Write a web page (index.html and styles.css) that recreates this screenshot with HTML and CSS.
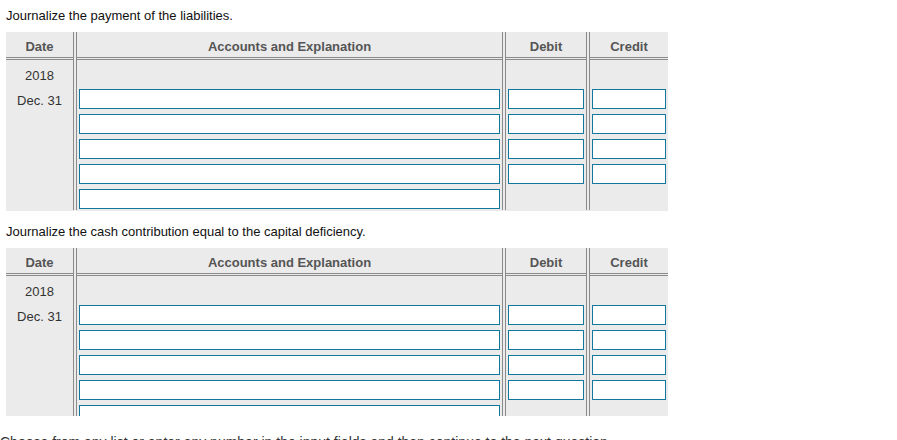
FILE: index.html
```html
<!DOCTYPE html>
<html>
<head>
<meta charset="utf-8">
<link rel="stylesheet" href="styles.css">
</head>
<body>
<div class="page">
  <p class="prompt">Journalize the payment of the liabilities.</p>
  <div class="journal">
    <div class="col col-date">
      <div class="head">Date</div>
      <div class="cell text">2018</div>
      <div class="cell text">Dec. 31</div>
    </div>
    <div class="col col-acct">
      <div class="head">Accounts and Explanation</div>
      <div class="cell"></div>
      <div class="cell"><input class="field"></div>
      <div class="cell"><input class="field"></div>
      <div class="cell"><input class="field"></div>
      <div class="cell"><input class="field"></div>
      <div class="cell"><input class="field"></div>
    </div>
    <div class="col col-debit">
      <div class="head">Debit</div>
      <div class="cell"></div>
      <div class="cell"><input class="field"></div>
      <div class="cell"><input class="field"></div>
      <div class="cell"><input class="field"></div>
      <div class="cell"><input class="field"></div>
    </div>
    <div class="col col-credit">
      <div class="head">Credit</div>
      <div class="cell"></div>
      <div class="cell"><input class="field"></div>
      <div class="cell"><input class="field"></div>
      <div class="cell"><input class="field"></div>
      <div class="cell"><input class="field"></div>
    </div>
  </div>

  <p class="prompt prompt-2">Journalize the cash contribution equal to the capital deficiency.</p>
  <div class="clip">
    <div class="journal">
      <div class="col col-date">
        <div class="head">Date</div>
        <div class="cell text">2018</div>
        <div class="cell text">Dec. 31</div>
      </div>
      <div class="col col-acct">
        <div class="head">Accounts and Explanation</div>
        <div class="cell"></div>
        <div class="cell"><input class="field"></div>
        <div class="cell"><input class="field"></div>
        <div class="cell"><input class="field"></div>
        <div class="cell"><input class="field"></div>
        <div class="cell"><input class="field"></div>
      </div>
      <div class="col col-debit">
        <div class="head">Debit</div>
        <div class="cell"></div>
        <div class="cell"><input class="field"></div>
        <div class="cell"><input class="field"></div>
        <div class="cell"><input class="field"></div>
        <div class="cell"><input class="field"></div>
      </div>
      <div class="col col-credit">
        <div class="head">Credit</div>
        <div class="cell"></div>
        <div class="cell"><input class="field"></div>
        <div class="cell"><input class="field"></div>
        <div class="cell"><input class="field"></div>
        <div class="cell"><input class="field"></div>
      </div>
    </div>
  </div>
</div>
<p class="footnote">Choose from any list or enter any number in the input fields and then continue to the next question.</p>
</body>
</html>
```

FILE: styles.css
```css
* { box-sizing: border-box; }

html, body {
  margin: 0;
  padding: 0;
  background: #ffffff;
}

body {
  font-family: "Liberation Sans", Arial, sans-serif;
  font-size: 13px;
  line-height: 15px;
  color: #111111;
  width: 897px;
  height: 440px;
  overflow: hidden;
}

.page {
  padding: 8px 0 0 6px;
}

.prompt {
  margin: 0 0 9px 0;
  height: 15px;
}

.prompt-2 {
  margin-top: 13px;
}

.journal {
  display: flex;
  width: 662px;
  background: #ebebeb;
  padding-bottom: 1px;
}

.clip {
  height: 168px;
  overflow: hidden;
}

.col {
  display: flex;
  flex-direction: column;
}

.col-date { width: 67px; }
.col-acct { width: 429px; }
.col-debit { width: 84px; }
.col-credit { width: 82px; }

.col-acct,
.col-debit,
.col-credit {
  border-left: 4px double #8a8a8a;
}

.head {
  height: 28px;
  padding-top: 7px;
  border-bottom: 3px double #8a8a8a;
  text-align: center;
  font-weight: bold;
  color: #555555;
}

.cell {
  height: 25px;
  padding: 4px 0 0 2px;
}

.cell.text {
  padding: 8px 0 0 0;
  text-align: center;
  color: #333333;
}

.field {
  display: block;
  margin: 0;
  height: 20px;
  border: 1px solid #12779f;
  background: #ffffff;
  padding: 0 3px;
  font: inherit;
  outline: none;
}

.col-acct .field { width: 421px; }
.col-debit .field { width: 76px; }
.col-credit .field { width: 74px; }

.footnote {
  margin: 18px 0 0 0;
  padding-left: 0;
  font-size: 14px;
  line-height: 16px;
  color: #333333;
}
```
